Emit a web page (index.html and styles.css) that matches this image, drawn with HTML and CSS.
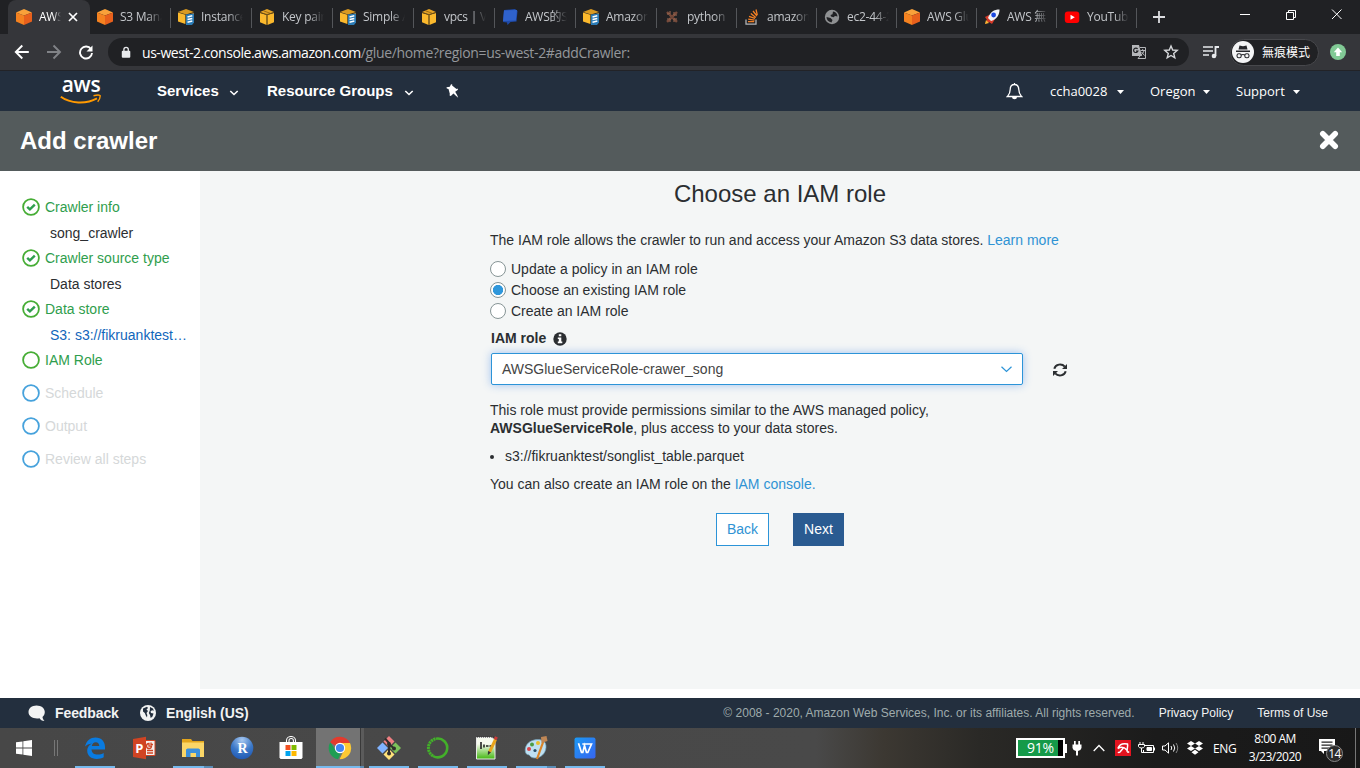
FILE: index.html
```html
<!DOCTYPE html>
<html lang="en">
<head>
<meta charset="utf-8">
<title>AWS Glue Console</title>
<link rel="stylesheet" href="styles.css">
</head>
<body>
<svg width="0" height="0" class="defs">
  <symbol id="cube-orange" viewBox="0 0 16 16"><path fill="#f9a13a" d="M8 0l8 3.4L8 6.6 0 3.4z"/><path fill="#f58220" d="M0 3.400l8 3.200V16l-8-3.400z"/><path fill="#e8601c" d="M16 3.400L8 6.600V16l8-3.400z"/></symbol>
  <symbol id="cube-doc" viewBox="0 0 16 16"><path fill="#d99a22" d="M0 3l8-3 8 3-8 2.600z"/><path fill="#fbb92d" d="M0 3.600l7.400 2.200V15L0 12.400z"/><path fill="#c97c14" d="M8.400 6.400L16 3.800v8.600L8.400 15z"/><path fill="#2b7bb5" d="M8 5.600l8-1v9L14 16H8z"/><path stroke="#fff" stroke-width="1.500" d="M9.500 8l4.800-1.200M9.500 10.600l4.800-1.200M9.500 13.200l4.800-1.200"/></symbol>
  <symbol id="cube-yellow" viewBox="0 0 16 16"><path fill="#e5a325" d="M1 3l7-3 7 3-7 2.400z"/><path fill="#fbb92d" d="M1 4l6.600 2v10L1 13.200zM15 4L8.400 6v10l6.600-2.800z"/><path stroke="#7a5310" stroke-width=".7" d="M1 3.500l7 2 7-2M8 6v10M4.500 1.800l7 2.600" fill="none"/></symbol>
</svg>

<div class="tabs">
  <div class="tab active"><svg class="fav"><use href="#cube-orange"/></svg><span class="label">AWS</span><svg class="close" viewBox="0 0 10 10"><path d="M1 1l8 8M9 1L1 9"/></svg></div>
  <div class="tab"><svg class="fav"><use href="#cube-orange"/></svg><span class="label">S3 Mana</span></div>
  <div class="tab"><svg class="fav"><use href="#cube-doc"/></svg><span class="label">Instances</span></div>
  <div class="tab"><svg class="fav"><use href="#cube-yellow"/></svg><span class="label">Key pairs</span></div>
  <div class="tab"><svg class="fav"><use href="#cube-doc"/></svg><span class="label">Simple AD</span></div>
  <div class="tab"><svg class="fav"><use href="#cube-yellow"/></svg><span class="label">vpcs | VPC</span></div>
  <div class="tab"><svg class="fav" viewBox="0 0 16 16"><path fill="#1f4aa8" d="M2 1l11-1 2.500 2-1 10.500-6 .5-3 3-.5-2.500-4-.5z"/><path fill="#2f62cc" d="M2 1.500L15 1l-1.200 10.500L1 12z"/></svg><span class="label">AWS的S3</span></div>
  <div class="tab"><svg class="fav"><use href="#cube-doc"/></svg><span class="label">Amazon</span></div>
  <div class="tab short"><svg class="fav" viewBox="0 0 16 16"><path stroke="#7a4c3c" stroke-width="2.400" fill="none" stroke-dasharray="3 .7" d="M3 3l10 10M13 3L3 13"/><path stroke="#a06a52" stroke-width="1" d="M3 5h3V2M10 3v3h3M3 10h3v3M10 13v-3h3" fill="none"/></svg><span class="label">python</span></div>
  <div class="tab short"><svg class="fav" viewBox="0 0 16 16"><path stroke="#b0b3b6" stroke-width="1.300" fill="none" d="M2 10.500v4.600h10v-4.600"/><path stroke="#f48024" stroke-width="1.300" d="M4 12.700h6.200M4.200 10.200l6.300.9M5 7.400l6 2M6.800 4.600l5 3.800M9 2l4 5M12 .5l1.300 5.500"/></svg><span class="label">amazon</span></div>
  <div class="tab short"><svg class="fav" viewBox="0 0 16 16"><circle cx="8" cy="8" r="7.200" fill="#8f9193"/><path fill="#202124" d="M9 2.600c3 .4 4.400 2.600 4.500 5L11 7 9.500 8.200 7 7.500 6.500 6l2-.8zM2.500 8l4 1 2 2-1 2.400C4.500 13 2.500 11 2.500 8z"/></svg><span class="label">ec2-44-2</span></div>
  <div class="tab short"><svg class="fav"><use href="#cube-orange"/></svg><span class="label">AWS Glue</span></div>
  <div class="tab short"><svg class="fav" viewBox="0 0 16 16"><path fill="#d63a28" d="M5 6L1 8l2 3-2 4 4-2 3 2 3-5z"/><path fill="#f7b733" d="M1 15l1-4 3 3z"/><path fill="#f1f3f6" d="M15.500.5C10 .5 6 3 4 9l3 3c6-2 8.500-6 8.500-11.500z"/><circle cx="9.600" cy="6" r="2.400" fill="#1b48e0"/></svg><span class="label">AWS 無</span></div>
  <div class="tab short"><svg class="fav" viewBox="0 0 16 16"><rect x=".8" y="2.500" width="14.500" height="11.500" rx="3" fill="#f00"/><path fill="#fff" d="M6.500 5.700l4.300 2.500-4.300 2.500z"/></svg><span class="label">YouTube</span></div>
  <svg class="newtab" viewBox="0 0 12 12"><path d="M6 0v12M0 6h12" stroke="#dcdde0" stroke-width="1.800"/></svg>
  <svg class="winctl" width="104" height="14" viewBox="0 0 104 14" fill="none" stroke="#fff"><path d="M1 6.500h10M47.500 4.500h7v7h-7zM49.500 4.500v-2h7v7h-2M93 1.500l9.500 9.500M102.500 1.500L93 11"/></svg>
</div>

<div class="toolbar">
  <svg class="navicons" width="80" height="16" viewBox="0 0 80 16" fill="none" stroke-width="1.900"><path stroke="#fff" d="M14.800 8H2M8.300 1.500L1.800 8l6.500 6.500"/><path stroke="#818387" d="M33 8h13M39.500 1.500L46 8l-6.500 6.500"/><path stroke="#fff" d="M77 5.200A6 6 0 1 0 78 9"/><path fill="#fff" d="M78.500 1.500v6h-6z"/></svg>
  <div class="omnibox">
    <svg width="10" height="13" viewBox="0 0 10 13"><rect x=".8" y="4.800" width="8.500" height="7" rx="1" fill="#e8eaed"/><path d="M2.900 5.500v-2a2.200 2.200 0 0 1 4.400 0v2" fill="none" stroke="#e8eaed" stroke-width="1.300"/></svg>
    <span class="url"><b>us-west-2.console.aws.amazon.com</b>/glue/home?region=us-west-2#addCrawler:</span>
    <svg class="translate" width="16" height="16" viewBox="0 0 16 16"><path fill="#b4b6b9" d="M1 1h7l3 11H1z"/><path fill="none" stroke="#b4b6b9" d="M9 3.500h5.500v11H7l2-2.500"/><path fill="none" stroke="#202124" stroke-width="1.200" d="M6.600 5a2.200 2.200 0 1 0 .3 2H5"/><path fill="none" stroke="#b4b6b9" d="M9.500 6.500h4.500M11.700 5v1.500M13 6.500c-.5 2-1.500 3.500-3 4.500M10.500 8l3 3.500"/></svg>
    <svg class="star" width="16" height="16" viewBox="0 0 16 16"><path fill="none" stroke="#d5d7da" stroke-width="1.400" d="M8 2l1.700 4 4.500.4-3.500 3 1.100 4.400L8 11.500l-3.800 2.300 1.100-4.400-3.500-3 4.500-.4z"/></svg>
  </div>
  <svg class="music" width="17" height="14" viewBox="0 0 17 14"><path stroke="#e8eaed" stroke-width="1.700" d="M0 2h10M0 6h10M0 10h6" fill="none"/><path fill="none" stroke="#e8eaed" stroke-width="1.800" d="M12.500 11V2H16"/><circle cx="11" cy="11" r="2.300" fill="#e8eaed"/></svg>
  <div class="incognito"><svg width="22" height="22" viewBox="0 0 22 22"><circle cx="11" cy="11" r="11" fill="#f4f5f6"/><path fill="#26272b" d="M7.500 4.500l3.500.7 3.500-.7 1 4h-9zM4 9.500h14V11H4z"/><g fill="none" stroke="#26272b" stroke-width="1.100"><rect x="5" y="12.700" width="4.200" height="4" rx="1.800"/><rect x="12.800" y="12.700" width="4.200" height="4" rx="1.800"/><path d="M9 14q2-1 4 0"/></g></svg><span>無痕模式</span></div>
  <svg class="update" width="16" height="16" viewBox="0 0 16 16"><circle cx="8" cy="8" r="8" fill="#81c995"/><path fill="#fff" d="M8 3.500l4.200 4.700H9.800V12H6.200V8.200H3.800z"/></svg>
</div>

<div class="awsnav">
  <div class="logo"><span>aws</span><svg width="42" height="11" viewBox="0 0 42 11"><path fill="none" stroke="#f90" stroke-width="2" d="M.8 2.800C10 9.500 26 10.500 37 4.300"/><path fill="none" stroke="#f90" stroke-width="1.400" d="M33.500 1.700q5-1.200 6.600-.2.400 3-2.400 6.300"/></svg></div>
  <b class="services">Services</b><svg class="chev" viewBox="0 0 8 6"><path d="M.3 1L4 4.500 7.700 1"/></svg>
  <b class="groups">Resource Groups</b><svg class="chev" viewBox="0 0 8 6"><path d="M.3 1L4 4.500 7.700 1"/></svg>
  <svg class="pin" width="13" height="14" viewBox="0 0 13 14"><path fill="#fff" d="M5 .2l1.300.3-.2 1 4.400 3.400 1-.3.500 1.200-2.800 2 2 3.500 1 2.500-2.100-1.700-2.600-2.700L4.800 12l-1.200-.5.2-1.700L2.500 5 .8 4.600.5 3.300 3.800 2.700z"/></svg>
  <svg class="bell" width="17" height="18" viewBox="0 0 17 18"><path fill="none" stroke="#fff" stroke-width="1.300" d="M8.500 1v1.500M8.500 2.500c-3 0-4.300 2.200-4.300 5 0 4-1 5-2.800 7h14.200C13.800 12.500 12.800 11.500 12.800 7.500c0-2.800-1.300-5-4.300-5z"/><path fill="#fff" d="M6 15h5a2.500 2.300 0 0 1-5 0z"/></svg>
  <span class="menu account">ccha0028</span><svg class="caret" viewBox="0 0 7 4"><path d="M0 0h7L3.500 4z"/></svg>
  <span class="menu region">Oregon</span><svg class="caret" viewBox="0 0 7 4"><path d="M0 0h7L3.500 4z"/></svg>
  <span class="menu support">Support</span><svg class="caret" viewBox="0 0 7 4"><path d="M0 0h7L3.500 4z"/></svg>
</div>

<div class="titlebar"><h1>Add crawler</h1><svg width="20" height="20" viewBox="0 0 20 20"><path stroke="#fff" stroke-width="5.600" stroke-linecap="round" d="M3.800 3.800l12.400 12.400M16.200 3.800L3.800 16.200"/></svg></div>

<div class="body">
  <div class="steps">
    <div class="step done"><svg viewBox="0 0 18 18"><circle cx="9" cy="9" r="7.900"/><path d="M5.200 8.800l2.700 2.600L12.800 6.600"/></svg>Crawler info</div>
    <div class="sub">song_crawler</div>
    <div class="step done"><svg viewBox="0 0 18 18"><circle cx="9" cy="9" r="7.900"/><path d="M5.200 8.800l2.700 2.600L12.800 6.600"/></svg>Crawler source type</div>
    <div class="sub">Data stores</div>
    <div class="step done"><svg viewBox="0 0 18 18"><circle cx="9" cy="9" r="7.900"/><path d="M5.200 8.800l2.700 2.600L12.800 6.600"/></svg>Data store</div>
    <div class="sub link">S3: s3://fikruanktest…</div>
    <div class="step done"><svg viewBox="0 0 18 18"><circle cx="9" cy="9" r="7.900"/></svg>IAM Role</div>
    <div class="step next"><svg viewBox="0 0 18 18"><circle cx="9" cy="9" r="7.900"/></svg>Schedule</div>
    <div class="step next"><svg viewBox="0 0 18 18"><circle cx="9" cy="9" r="7.900"/></svg>Output</div>
    <div class="step next"><svg viewBox="0 0 18 18"><circle cx="9" cy="9" r="7.900"/></svg>Review all steps</div>
  </div>
  <div class="content">
    <h2>Choose an IAM role</h2>
    <div class="form">
      <p class="intro">The IAM role allows the crawler to run and access your Amazon S3 data stores. <a>Learn more</a></p>
      <div class="radios">
        <div class="radio"><i></i>Update a policy in an IAM role</div>
        <div class="radio"><i class="on"></i>Choose an existing IAM role</div>
        <div class="radio"><i></i>Create an IAM role</div>
      </div>
      <div class="field">IAM role<svg width="14" height="14" viewBox="0 0 14 14"><circle cx="7" cy="7" r="6.700" fill="#2b2e31"/><path fill="#fff" d="M5.800 2.300h2.500v2H5.800zM4.800 5.400h3.500v4h1v1.800H4.800V9.400h1V7.100h-1z"/></svg></div>
      <div class="pick">
        <div class="select"><span>AWSGlueServiceRole-crawer_song</span><svg width="11" height="7" viewBox="0 0 11 7"><path fill="none" stroke="#2c94d8" stroke-width="1.200" d="M.5.800l5 4.700 5-4.700"/></svg></div>
        <svg class="refresh" width="14" height="14" viewBox="0 0 14 14"><path fill="none" stroke="#2b2e31" stroke-width="2" d="M1.300 5.800C2.500 1 8.800.2 11.800 3.600M12.700 8.200c-1.200 4.800-7.500 5.600-10.500 2.200"/><path fill="#2b2e31" d="M14 1v5H9zM0 13V8h5z"/></svg>
      </div>
      <p class="policy">This role must provide permissions similar to the AWS managed policy,<br><b>AWSGlueServiceRole</b>, plus access to your data stores.</p>
      <ul><li>s3://fikruanktest/songlist_table.parquet</li></ul>
      <p class="also">You can also create an IAM role on the <a>IAM console.</a></p>
      <div class="buttons"><button class="back">Back</button><button class="go">Next</button></div>
    </div>
  </div>
</div>

<div class="footer">
  <svg class="bubble" width="18" height="17" viewBox="0 0 18 17"><path fill="#f2f3f3" d="M8.500.5c4.800 0 8.300 2.800 8.300 6.500 0 2.300-1 4-2.300 5 .2 1.800 1 3 2 4-2.500 0-4.200-1.200-5-2.800-6 1-11-1.700-11-6.200C.5 3.300 3.900.5 8.500.5z"/></svg>
  <b class="fb">Feedback</b>
  <svg class="globe" width="16" height="16" viewBox="0 0 16 16"><circle cx="8" cy="8" r="8" fill="#f2f3f3"/><path fill="#232f3e" d="M3 3.500l4-1.700 1 1.200-1.500 1.500L8 6 6.500 8l.8 2L7 12.500 5.800 10.500 4.800 8 3 6.500zM10 2l3 1.500.8 2.200-1.800-.4-1.500 1.200.5 1.500 2.500.5-1 3-1.800 1.500-.7-3L8.800 8l1-2.500z"/></svg>
  <b class="lang">English (US)</b>
  <span class="copy">© 2008 - 2020, Amazon Web Services, Inc. or its affiliates. All rights reserved.</span>
  <span class="privacy">Privacy Policy</span><span class="terms">Terms of Use</span>
</div>

<div class="taskbar">
  <svg class="start" width="16" height="16" viewBox="0 0 16 16" fill="#fff"><path d="M0 2.300L6.500 1.400v6.100H0zM7.300 1.200L16 0v7.500H7.300zM0 8.500h6.500v6.100L0 13.700zM7.300 8.500H16V16l-8.700-1.200z"/></svg>
  <span class="grip"></span>
  <div class="app run"><svg viewBox="0 0 24 24"><path fill="#0a7be0" d="M2 10.500C3.500 4.500 7.500 1.500 12.500 1.500c6 0 9.500 4.200 9.500 9.500v2.500H8.500c.2 3.700 3 5 6.200 5 2.300 0 4.300-.6 6-1.600v4.400c-2 1.100-4.300 1.700-7 1.700-5.500 0-9.500-3-9.500-8.400 0-3.300 1.700-5.700 4.800-7.200C5.800 7.800 3.500 8.800 2 10.500zM8.800 10h7.500c-.2-2.400-1.200-3.800-3.500-3.800-2.200 0-3.600 1.500-4 3.800z"/></svg></div>
  <div class="app"><svg viewBox="0 0 24 24"><path fill="#f5f0ee" stroke="#d04423" d="M12 4.500h11v15H12z"/><path fill="none" stroke="#d04423" stroke-width="1.300" d="M15 14.500h6M15 17h6M17 7.500a2.500 2.500 0 1 0 2.500 2.700H17zM19 6.500v2h2"/><path fill="#d04423" d="M1 3L14 .8v22.400L1 21z"/><text x="3.300" y="16.500" font-size="13" font-weight="700" font-family="Open Sans" fill="#fff">P</text></svg></div>
  <div class="app run multi"><svg viewBox="0 0 24 24"><path fill="#e3a51c" d="M1 3h9l1.500 2H23v4H1z"/><path fill="#fbd667" d="M1 6.500h22V21H1z"/><path fill="#3c8fdc" d="M5 21v-7.500l1.500-1h11l1.500 1V21h-4v-4H9.500v4z"/></svg></div>
  <div class="app"><svg viewBox="0 0 24 24"><defs><radialGradient id="rg" cx=".5" cy=".15" r=".9"><stop offset="0" stop-color="#a8c8f0"/><stop offset=".55" stop-color="#3b78c8"/><stop offset="1" stop-color="#1d55b0"/></radialGradient></defs><circle cx="12" cy="12" r="11.300" fill="url(#rg)"/><text x="12.500" y="16.500" text-anchor="middle" font-size="14" font-weight="700" font-family="Liberation Serif" fill="#fff">R</text></svg></div>
  <div class="app"><svg viewBox="0 0 24 24"><path fill="none" stroke="#fff" stroke-width="1.100" d="M7.500 6.500V4.500a4.500 4 0 0 1 9 0v2M10 6V4.500a2.200 2 0 0 1 4.400 0V6"/><path fill="#fff" d="M.5 6h23v15.500l-1 1.500h-21l-1-1.500z"/><path fill="#f25022" d="M6.500 9h5v5h-5z"/><path fill="#7fba00" d="M12.500 9h5v5h-5z"/><path fill="#00a4ef" d="M6.500 15h5v5h-5z"/><path fill="#ffb900" d="M12.500 15h5v5h-5z"/></svg></div>
  <div class="app chrome"><svg viewBox="0 0 24 24"><path fill="#e33b2e" d="M12 12L2 6.600A11.300 11.300 0 0 1 22 7z"/><path fill="#fcc934" d="M12 7h10a11.300 11.300 0 0 1-10.500 16.300L16 14z"/><path fill="#1e9e54" d="M2.300 6.200L7.500 14 13 17l-3 6.200A11.300 11.300 0 0 1 2.300 6.200z"/><circle cx="12" cy="12" r="5.200" fill="#fff"/><circle cx="12" cy="12" r="4.100" fill="#4285f4"/></svg></div>
  <div class="app run"><svg viewBox="0 0 24 24"><path fill="#ef7f82" d="M12 0l5.500 5.500L12 11 6.500 5.500z"/><path fill="#80b3ff" d="M5.500 6.500L11 12l-5.500 5.500L0 12z"/><path fill="#7cc25a" d="M18.500 6.500L24 12l-5.500 5.500L13 12z"/><path fill="#ffe27a" d="M12 13l5.500 5.500L12 24l-5.500-5.500z"/><path fill="none" stroke="#302e2c" stroke-width="2" d="M8 2.500L12 7v11M12 8l5 4.500"/><circle cx="12" cy="17.500" r="2" fill="#302e2c"/><circle cx="17" cy="12.500" r="2" fill="#302e2c"/><circle cx="12" cy="8" r="2" fill="#302e2c"/></svg></div>
  <div class="app run"><svg viewBox="0 0 24 24" fill="none" stroke="#43b02a"><path stroke-width="2.600" d="M10 2.700A9.400 9.400 0 1 1 7 20"/><path stroke-width="3" stroke-dasharray="2.200 .6" d="M7 20A9.400 9.400 0 0 1 10 2.700"/></svg></div>
  <div class="app run"><svg viewBox="0 0 24 24"><defs><linearGradient id="np" x2="0" y2="1"><stop offset=".3" stop-color="#f6faee"/><stop offset="1" stop-color="#43b811"/></linearGradient></defs><path fill="url(#np)" stroke="#e8e8e8" d="M1.500 1.500H17l3 3v18.500h-18.500z"/><path stroke="#333" stroke-dasharray="1 1" d="M2 1h18"/><path stroke="#222" stroke-width="1.600" d="M6 6v7M9 8.500v3M11 10h2.500M14.500 10H17"/><path stroke="#e8a41c" stroke-width="3" d="M20.500 3.500L14.500 16"/><path stroke="#c83838" stroke-width="3" d="M21.500 .8l-1.300 2.700"/><path fill="#333" d="M13 15l3 1.300-3.200 3z"/></svg></div>
  <div class="app run multi"><svg viewBox="0 0 24 24"><path fill="#bfe0f2" stroke="#6f9db8" stroke-width=".7" d="M10 4c8-1.500 12.500 1.500 12 7.500-.5 6-5 10.500-11 10.500-5 0-5-3-6.500-3.200C-1 18.500 0 6 10 4z"/><circle cx="5" cy="13" r="2" fill="#d9434a"/><circle cx="8" cy="8.500" r="2" fill="#4c9b45"/><circle cx="14" cy="7" r="2" fill="#e9bd2e"/><circle cx="11" cy="14.500" r="1.600" fill="#28506a"/><path stroke="#db8427" stroke-width="2.200" d="M19.500 5L13 23"/><path fill="#bf8756" d="M17 1l5.500-1 1 5-6 2z"/></svg></div>
  <div class="app run"><svg viewBox="0 0 24 24"><defs><linearGradient id="wp" x2="1" y2="1"><stop stop-color="#1b9af5"/><stop offset="1" stop-color="#3765f0"/></linearGradient></defs><rect x="1.500" y="1.500" width="21" height="21" rx="2" fill="url(#wp)"/><path fill="none" stroke="#fff" stroke-width="1.700" d="M9.300 8H18.500L14.800 16.500h-1.300L11.500 9.500l-1.700 7H8.500L5.500 7.200"/></svg></div>

  <div class="tray">
    <div class="battery"><span>91%</span></div>
    <svg class="plug" width="10" height="16" viewBox="0 0 10 16"><path fill="#fff" d="M2 1h1.700v4H2zM6.300 1H8v4H6.300zM.5 4.500h9V8Q9 10.500 6 11v4.500H4V11Q1 10.500.5 8z"/></svg>
    <svg class="up" width="12" height="8" viewBox="0 0 12 8"><path fill="none" stroke="#fff" stroke-width="1.300" d="M.7 7L6 1.500 11.300 7"/></svg>
    <svg class="avira" width="16" height="16" viewBox="0 0 16 16"><path fill="#e3131f" d="M0 0h16v16H0z"/><path fill="none" stroke="#fff" stroke-width="1.500" d="M2.800 8.500C4.500 4 8 3 12.500 4c.7 2.500-.8 5-.3 7.500.5 1 1.200.8 1.800 0M2.800 8.500Q8 5.500 11.800 10M8.300 8L5 12q-1.200 1-2 0"/></svg>
    <svg class="bat2" width="17" height="12" viewBox="0 0 17 12" fill="none" stroke="#fff"><path d="M6.500 3.500h9v7h-10V8"/><path fill="#fff" d="M9 5.500h4.500v3H9z"/><path d="M16.500 5.500v3M2 0v2.500M5 0v2.500M.5 2.500h6v2q-.5 1.500-3 1.500-2.500 0-3-1.500zM3.500 6v4.500H6"/></svg>
    <svg class="sound" width="17" height="12" viewBox="0 0 17 12" fill="none" stroke="#fff"><path d="M.5 4v4H3l3.500 3.200V.8L3 4zM9 4q1.500 2 0 4M11.500 2.500q2.500 3.500 0 7"/><path stroke="#888" d="M14 1q3.500 5 0 10"/></svg>
    <svg class="dropbox" width="16" height="14" viewBox="0 0 16 14" fill="#fff"><path d="M4 0l4 2.500L4 5 0 2.500zM12 0l4 2.500L12 5 8 2.500zM4 5l4 2.500L4 10 0 7.500zM12 5l4 2.500-4 2.500-4-2.500zM8 8.800l3.500 2.400L8 13.800l-3.500-2.600z"/></svg>
    <span class="eng">ENG</span>
    <div class="clock">8:00 AM<br>3/23/2020</div>
    <div class="notes"><svg width="16" height="15" viewBox="0 0 16 15"><path fill="#fff" d="M0 0h16v12H5v3l-3-3H0z"/><path stroke="#222" stroke-width="1.200" d="M2.500 3.200h11M2.500 6.200h11M2.500 9.200h11"/></svg><span>14</span></div>
    <span class="peek"></span>
  </div>
</div>
</body>
</html>
```
FILE: styles.css
```css
* { box-sizing: border-box; }
body { margin: 0; width: 1360px; height: 768px; overflow: hidden; display: flex; flex-direction: column; background: #fff; font: 14px "Liberation Sans", Arial, sans-serif; color: #2b2e31; }
svg { display: block; flex: none; }
.defs { position: absolute; }
h1, h2, p, ul { margin: 0; padding: 0; }

/* browser tabs */
.tabs { height: 34px; flex: none; background: #202124; display: flex; padding-left: 8px; font: 12px "Open Sans", "Noto Sans CJK TC", sans-serif; color: #c3c6ca; }
.tab { width: 81px; height: 34px; flex: none; display: flex; align-items: center; padding-left: 7px; background: linear-gradient(#54565a, #54565a) right 8px / 1px 20px no-repeat; }
.tab.short { width: 80px; }
.tab .fav { width: 16px; height: 16px; margin-right: 7px; }
.tab .label { width: 42px; overflow: hidden; white-space: nowrap; letter-spacing: -.25px; line-height: 20px; -webkit-mask-image: linear-gradient(90deg, #000 65%, transparent); mask-image: linear-gradient(90deg, #000 65%, transparent); }
.tab.active { width: 82px; padding-left: 8px; background: #35363a; border-radius: 8px 8px 0 0; color: #fff; }
.tab.active .label { width: 22px; }
.tab.active .close { width: 10px; height: 10px; margin-left: 7px; stroke: #fff; stroke-width: 1.7; }
.newtab { width: 12px; height: 12px; margin: 11px 0 0 16px; }
.winctl { margin: 8px 17px 0 auto; }

/* browser toolbar */
.toolbar { height: 37px; flex: none; background: #35363a; border-bottom: 1px solid #222327; display: flex; align-items: center; }
.navicons { margin-left: 14px; }
.omnibox { width: 1081px; height: 28px; margin-left: 14px; border-radius: 14px; background: #202124; display: flex; align-items: center; padding-left: 13px; }
.url { margin-left: 11px; font: 14px "Open Sans", sans-serif; letter-spacing: -.33px; color: #94979b; white-space: nowrap; }
.url b { font-weight: 400; letter-spacing: -.45px; color: #fff; }
.translate { margin-left: auto; }
.star { margin: 0 10px 0 16px; }
.music { margin-left: 14px; }
.incognito { width: 89px; height: 27px; margin-left: 10px; border: 1px solid #47484c; border-radius: 14px; background: #202124; display: flex; align-items: center; padding-left: 1px; font: 12px "Noto Sans CJK TC", sans-serif; color: #fff; }
.incognito span { margin: -2px 0 0 8px; white-space: nowrap; }
.update { margin-left: 11px; }

/* console navigation */
.awsnav { height: 40px; flex: none; background: #232f3e; display: flex; align-items: center; color: #fff; font-size: 15px; white-space: nowrap; }
.awsnav b { line-height: 17px; margin-bottom: 1px; }
.logo { width: 42px; height: 31px; margin-left: 60px; }
.logo span { display: block; height: 18px; text-align: center; font: 600 21px/16px "Open Sans", sans-serif; letter-spacing: -.3px; }
.awsnav .services { width: 61px; margin-left: 55px; }
.awsnav .groups { width: 126px; margin-left: 29px; }
.chev { width: 8px; height: 6px; margin: 3px 0 0 12px; fill: none; stroke: #fff; stroke-width: 1.6; overflow: visible; }
.pin { margin-left: 33px; }
.bell { margin-left: 547px; }
.menu { font: 500 13px "Open Sans", sans-serif; }
.account { margin-left: 27px; width: 59px; }
.region { margin-left: 26px; width: 45px; }
.support { margin-left: 26px; width: 49px; }
.caret { width: 7px; height: 4px; margin: 1px 0 0 8px; fill: #fff; }

.titlebar { height: 60px; flex: none; background: #545b5c; display: flex; align-items: center; justify-content: space-between; padding: 0 21px 1px 20px; color: #fff; }
.titlebar h1 { font-size: 24px; }
.titlebar svg { margin-bottom: 1px; }

/* wizard body */
.body { height: 527px; flex: none; display: flex; }
.steps { width: 200px; padding: 23px 0 0 22px; }
.step { height: 26px; display: flex; align-items: center; gap: 5px; }
.step svg { width: 18px; height: 18px; fill: none; stroke: #46ad35; stroke-width: 1.8; }
.step path { stroke-width: 2.4; stroke: #2f9e4d; }
.done { color: #2f9e4d; }
.next { color: #d5d8d9; margin-top: 7px; }
.next svg { stroke: #46a2dc; }
.sub { height: 25px; line-height: 26px; padding-left: 28px; white-space: nowrap; }
.sub.link { color: #1166bb; }
.content { width: 1160px; height: 518px; background: #f4f6f6; padding-top: 9px; display: flex; flex-direction: column; align-items: center; }
.content h2 { font-size: 24px; font-weight: 400; line-height: 28px; }
.form { width: 580px; line-height: 18px; }
.form a { color: #2f93d4; }
.intro { margin-top: 23px; white-space: nowrap; }
.radios { margin-top: 9px; }
.radio { height: 21px; padding-top: 3px; display: flex; line-height: 16px; }
.radio i { width: 16px; height: 16px; margin-right: 5px; border: 1px solid #879596; border-radius: 50%; background: #fff; }
.radio i.on { background: radial-gradient(circle, #2f97db 4.8px, #fff 5.4px); }
.field { margin-top: 8px; padding-left: 1px; display: flex; align-items: center; font-weight: 700; }
.field svg { margin: 2px 0 0 7px; }
.pick { margin-top: 6px; display: flex; align-items: center; }
.select { width: 532px; height: 32px; margin-left: 1px; border: 1px solid #2c94d8; border-radius: 2px; background: #fff; box-shadow: 0 0 8px rgba(60, 130, 230, .45); display: flex; align-items: center; justify-content: space-between; padding: 0 10px; color: #444; }
.refresh { margin: 2px 0 0 30px; }
.policy { margin-top: 16px; }
.form ul { margin-top: 10px; padding-left: 15px; }
.also { margin-top: 10px; }
.buttons { margin-top: 20px; display: flex; justify-content: center; gap: 24px; }
.buttons button { height: 33px; padding: 0 0 2px; font: 14px "Liberation Sans", Arial, sans-serif; }
.back { width: 53px; border: 1px solid #2c94d8; background: #fff; color: #2f93d4; }
.go { width: 51px; border: 0; background: #2a5b91; color: #fff; }

/* console footer */
.footer { height: 30px; flex: none; background: #232f3e; display: flex; align-items: center; color: #f2f3f3; font-size: 12px; white-space: nowrap; }
.footer b { font-size: 14px; }
.bubble { margin-left: 28px; }
.fb { margin-left: 9px; width: 66px; letter-spacing: -.1px; }
.globe { margin-left: 19px; }
.lang { margin-left: 10px; letter-spacing: -.05px; }
.copy { margin-left: auto; color: #9fabac; }
.privacy { margin-left: 24px; }
.terms { margin: 0 32px 0 24px; }

/* desktop taskbar */
.taskbar { height: 40px; flex: none; background: linear-gradient(90deg, #474747 0, #494949 60%, #3c3832 65%, #2a2926 72%, #1b1b1b 85%, #181818); display: flex; align-items: center; font-family: "Open Sans", sans-serif; color: #fff; }
.start { margin-left: 16px; }
.grip { width: 4px; height: 16px; margin: 0 12px 0 22px; border: solid #777; border-width: 0 1px; }
.app { width: 49px; height: 40px; flex: none; padding: 8px 0 0 13px; }
.app svg { width: 24px; height: 24px; }
.run { background: linear-gradient(#76b9ed, #76b9ed) 5px 38px / 40px 2px no-repeat; }
.multi { background: linear-gradient(90deg, #76b9ed 31px, #5a8cb5 31px) 5px 38px / 40px 2px no-repeat; }
.chrome { background: linear-gradient(90deg, #76b9ed 44px, #5a8cb5 44px) 1px 38px / 48px 2px no-repeat, linear-gradient(90deg, transparent 1px, #737373 1px 45px, #393939 45px 46px, #5b5b5b 46px); }
.tray { margin-left: auto; display: flex; align-items: center; height: 40px; }
.battery { width: 49px; height: 20px; border: 2px solid #fff; background: linear-gradient(90deg, #159a49 40px, #000 40px); padding-left: 9px; font-size: 14px; line-height: 16px; position: relative; letter-spacing: -.3px; }
.battery::after { content: ""; position: absolute; right: -4px; top: 4px; width: 2px; height: 9px; background: #fff; }
.plug { margin-left: 7px; }
.up { margin-left: 11px; }
.avira { margin-left: 10px; }
.bat2 { margin-left: 7px; }
.sound { margin-left: 7px; }
.dropbox { margin-left: 8px; }
.eng { width: 24px; margin-left: 10px; font-size: 12px; letter-spacing: -.3px; }
.clock { width: 54px; margin-left: 11px; text-align: center; font-size: 12px; line-height: 18px; letter-spacing: -.5px; white-space: nowrap; }
.notes { width: 25px; height: 24px; margin-left: 17px; position: relative; padding-top: 3px; }
.notes span { position: absolute; left: 7px; top: 9px; width: 17px; height: 17px; border: 1px solid #888; border-radius: 50%; background: #2b2b2b; font-size: 12px; line-height: 15px; text-align: center; letter-spacing: -.6px; }
.peek { width: 1px; height: 40px; margin: 0 4px 0 11px; background: #777; }
```
